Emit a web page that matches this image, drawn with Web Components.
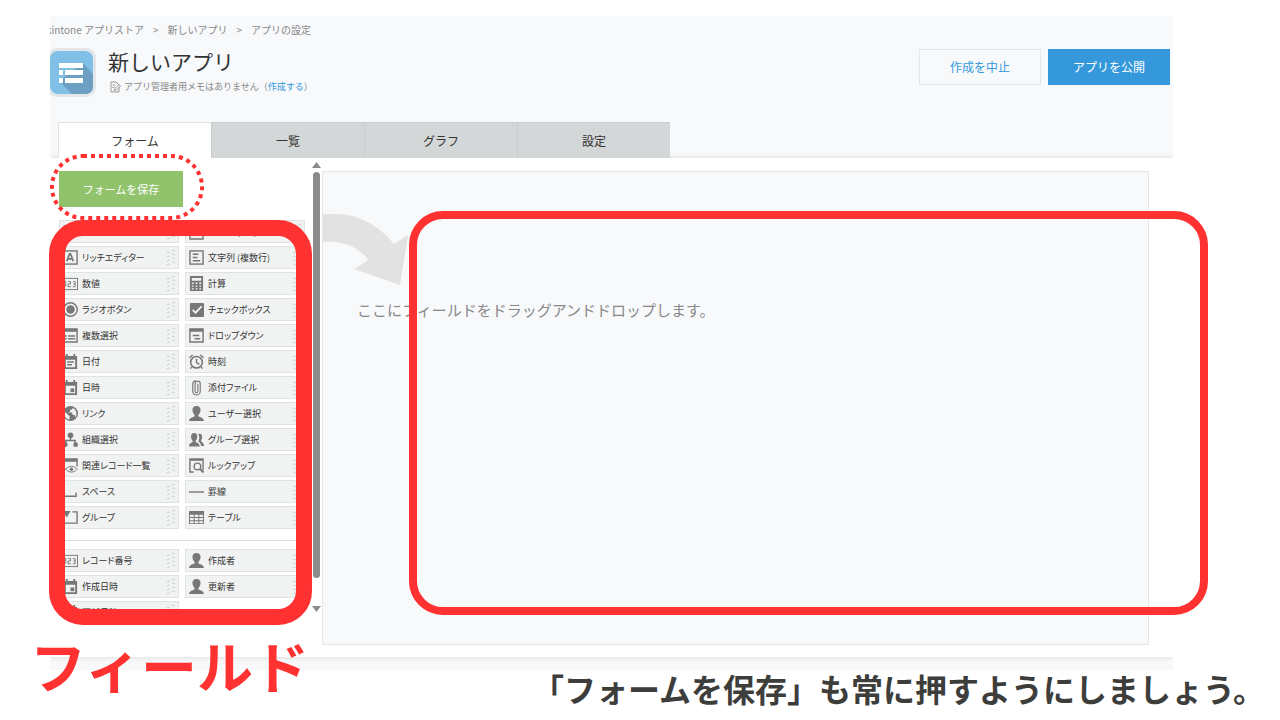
<!DOCTYPE html>
<html lang="ja">
<head>
<meta charset="utf-8">
<title>アプリの設定</title>
<style>
  body { margin: 0; background: #fff; color: #333; font-family: "Noto Sans CJK JP", sans-serif; }
</style>
</head>
<body>
<guide-slide></guide-slide>

<script>
const define = (name, html, setup) => {
  const template = document.createElement('template');
  template.innerHTML = html;
  customElements.define(name, class extends HTMLElement {
    connectedCallback() {
      if (this.shadowRoot) return;
      this.attachShadow({ mode: 'open' }).append(template.content.cloneNode(true));
      if (setup) setup(this, this.shadowRoot);
    }
  });
};

const person = '<path fill="currentColor" d="M8 0c3 0 4.500 2 4.300 4.500C12.200 7 11 8.500 10 9.500v1.500c1 1 5.500 1.200 6 5H0c.5-3.800 5-4 6-5V9.500C5 8.500 3.800 7 3.700 4.500 3.500 2 5 0 8 0z"/>';
const calendar = '<path fill="currentColor" fill-rule="evenodd" d="M1 2h2V0h2v2h6V0h2v2h2v14H1zM3 6v8h10V6z"/>';
const numbers = '<rect x="-1" y="2.500" width="16.500" height="12" fill="none" stroke="currentColor"/><path fill="none" stroke="currentColor" d="M1.500 6.500L3 5.500v6M5.500 6h2.500v2.500H5.500V11.500H8.500M10.500 6H13v5.500h-2.500M11 8.500h2"/>';
const ICONS = {
  label: '<path fill="currentColor" d="M1 1h14v3h-2V3H9v10h2v2H5v-2h2V3H3v1H1z"/>',
  text: '<path fill="none" stroke="currentColor" stroke-width="1.500" d="M1 2h14v14H1zM4 5v6"/>',
  rich: '<rect x="0" y="1" width="15" height="14" fill="none" stroke="currentColor" stroke-width="1.500"/><path fill="none" stroke="currentColor" stroke-width="1.800" d="M4 12l3-8h1l3 8M5 9.500h5"/>',
  multi: '<rect x="1" y="1" width="14" height="14" fill="none" stroke="currentColor" stroke-width="1.500"/><path stroke="currentColor" stroke-width="1.500" d="M4 4.500h6M4 8h5M4 11.500h8"/>',
  number: numbers,
  calc: '<path fill="currentColor" fill-rule="evenodd" d="M1 0h14v16H1zM3 2v3h10V2zM3 7v1.500h2V7zm4 0v1.500h2V7zm4 0v1.500h2V7zM3 10v1.500h2V10zm4 0v1.500h2V10zm4 0v1.500h2V10zM3 13v1.500h2V13zm4 0v1.500h2V13zm4 0v1.500h2V13z"/>',
  radio: '<circle cx="8" cy="8" r="7.200" fill="none" stroke="currentColor" stroke-width="1.500"/><circle cx="8" cy="8" r="4.500" fill="currentColor"/>',
  check: '<rect x="1" y="1" width="15" height="15" rx="1" fill="currentColor"/><path d="M4 8.500l3 3 6.500-7" fill="none" stroke="#fff" stroke-width="1.800"/>',
  select: '<path fill="none" stroke="currentColor" stroke-width="1.500" d="M0 1h15v14H0zM2 8.500h2M5.500 8.500H13M2 11.500h2M5.500 11.500H13"/><path fill="currentColor" d="M0 1h15v3H0z"/>',
  dropdown: '<path fill="none" stroke="currentColor" stroke-width="1.500" d="M1 1h14v14H1zM4 8h7M6 11.500h6"/><path fill="currentColor" d="M1 1h14v3H1z"/>',
  date: calendar + '<path stroke="currentColor" stroke-width="1.500" d="M4.500 8.500h7M4.500 11.500h5"/>',
  time: '<circle cx="8" cy="8.800" r="6.200" fill="none" stroke="currentColor" stroke-width="1.600"/><path d="M8 5v4l3 2M.5 4l3.500-3M15.500 4L12 1M3 14l-1.500 1.500M13 14l1.500 1.500" fill="none" stroke="currentColor" stroke-width="1.500"/>',
  datetime: calendar + '<path fill="currentColor" d="M8 9h4v4H8z"/>',
  clip: '<path d="M9.500 4v8a1.500 1.500 0 0 1-3 0V4a2 2 0 0 1 5.500 0v8a4 4 0 0 1-8 0V4a3.500 3.500 0 0 1 3-3.300" fill="none" stroke="currentColor" stroke-width="1.200"/>',
  link: '<circle cx="8" cy="8" r="8" fill="currentColor"/><path fill="#f1f2f2" d="M1.500 5.500L5 9l2 2v3.500C3 14 1 10 1.500 5.500zM10.500 2l-1 2H7.500v2L5 7h4.500l1 2.500h2L13 12c2-2.500 2.200-7.500-2.500-10z"/>',
  user: person,
  org: '<circle cx="8" cy="3.500" r="3" fill="currentColor"/><path fill="none" stroke="currentColor" stroke-width="1.500" d="M8 5v4M3 12V9h10v3"/><circle cx="2.500" cy="13.500" r="2.500" fill="currentColor"/><circle cx="13.500" cy="13.500" r="2.500" fill="currentColor"/>',
  group: '<path fill="currentColor" d="M5.500 1C8 1 9 3 8.800 5 8.700 7 8 8.500 7 9.500v1c1 1 4 1.200 4.500 5H0c.3-3.800 3-4 4-5v-1C3 8.500 2.200 7 2.200 5 2 3 3 1 5.500 1zM10 2c4-1 5 3 3 7v1c1 1 3 1.500 3 5h-3c-.3-2.500-1.500-4-3-5 1-2 1.500-5 0-8z"/>',
  related: '<path fill="none" stroke="currentColor" stroke-width="1.500" d="M3 12H0V1h15v8"/><path fill="currentColor" d="M0 1h15v3H0z"/><path fill="none" stroke="currentColor" d="M3 12c3-4 9-4 12 0-3 4-9 4-12 0z"/><circle cx="9" cy="12" r="1.800" fill="currentColor"/>',
  lookup: '<path fill="none" stroke="currentColor" stroke-width="1.500" d="M5 15H1V1h14v12"/><path fill="currentColor" d="M1 1h14v2H1z"/><circle cx="9" cy="9" r="3.500" fill="none" stroke="currentColor" stroke-width="1.500"/><path stroke="currentColor" stroke-width="2" d="M11.500 11.500l4 4"/>',
  space: '<path fill="none" stroke="currentColor" stroke-width="1.500" d="M1 9v4h13V9"/>',
  rule: '<path stroke="currentColor" stroke-width="1.500" d="M0 8.500h16"/>',
  box: '<path fill="none" stroke="currentColor" stroke-width="1.500" d="M1 2v12h14V2H10"/><path fill="currentColor" d="M0 1h8L4 8z"/>',
  table: '<path fill="currentColor" fill-rule="evenodd" d="M0 1h16v14H0zM1 5v2.500h4V5zm5 0v2.500h4V5zm5 0v2.500h4V5zM1 8.500V11h4V8.500zm5 0V11h4V8.500zm5 0V11h4V8.500zM1 12v2h4v-2zm5 0v2h4v-2zm5 0v2h4v-2z"/>'
};

define('field-item', `
  <style>
    :host { display: flex; align-items: center; gap: 4px; height: 23px; box-sizing: border-box; padding: 0 2px 0 3px;
      background: #f1f2f2; border: 1px solid #e0e3e3; font-size: 9px; line-height: 16px; color: #333;
      font-feature-settings: "palt"; cursor: move; white-space: nowrap; }
    .icon { width: 15px; height: 15px; flex: none; color: #777; overflow: visible; }
    span { flex: 1; }
    .grip { width: 9px; height: 17px; flex: none; }
  </style>
  <svg class="icon" viewBox="0 0 16 16" aria-hidden="true"></svg>
  <span><slot></slot></span>
  <svg class="grip" viewBox="0 0 9 17" aria-hidden="true"><path fill="none" stroke="#c9cccc" d="M0 4q1.500-2 3 0M0 8q1.500-2 3 0M0 12q1.500-2 3 0M0 16q1.500-2 3 0M5 2q1.500-2 3 0M5 6q1.500-2 3 0M5 10q1.500-2 3 0M5 14q1.500-2 3 0"/></svg>`,
  (host, root) => { root.querySelector('.icon').innerHTML = ICONS[host.getAttribute('icon')]; });

define('action-button', `
  <style>
    :host { display: block; }
    button { display: block; box-sizing: border-box; min-width: 122px; height: 36px; padding: 0 20px; margin: 0;
      font: 12px/20px "Noto Sans CJK JP", sans-serif; color: #3498db; background: #f7f9fb; border: 1px solid #e3e7e8; cursor: pointer; }
    :host([kind="publish"]) button { background: #3498db; border-color: #3498db; color: #fff; }
    :host([kind="save"]) button { min-width: 124px; background: #91c36c; border-color: #91c36c; color: #fff; font-size: 11px; }
  </style>
  <button type="button"><slot></slot></button>`);

define('app-header', `
  <style>
    :host { display: block; padding: 5px 3px 0 0; overflow: hidden; }
    nav { display: flex; gap: 9px; margin-left: -4px; font-size: 10px; line-height: 18px; color: #888; }
    nav a { color: inherit; text-decoration: none; white-space: nowrap; }
    .row { display: flex; align-items: flex-start; gap: 12px; margin: 9px 0 0 -3px; }
    .badge { width: 49px; height: 49px; flex: none; }
    .heading { flex: 1; }
    h1 { margin: 0; font-size: 21px; line-height: 26px; font-weight: 400; color: #333; }
    p { display: flex; align-items: center; gap: 3px; margin: 4px 0 0 2px; font-size: 9px; line-height: 18px; color: #888; }
    p a { color: #3498db; text-decoration: none; }
    p svg { width: 11px; height: 12px; }
    .actions { display: flex; gap: 7px; padding-top: 1px; }
  </style>
  <nav aria-label="パンくずリスト"><a href="#store">kintone アプリストア</a><span>&gt;</span><a href="#app">新しいアプリ</a><span>&gt;</span><a href="#settings">アプリの設定</a></nav>
  <div class="row">
    <svg class="badge" viewBox="0 0 49 49" aria-hidden="true">
      <rect width="49" height="49" rx="10" fill="#e3e7e9"/><rect x="3" y="3" width="43" height="43" rx="8" fill="#80c0e6"/>
      <path fill="#6d9fc2" d="M12 33l13 13h13q8 0 8-8V26L36 15z"/>
      <path fill="#fff" d="M12 15h24v5H12zM12 22h4v5h-4zM18 22h18v5H18zM12 30h4v5h-4zM18 30h18v5H18z"/>
    </svg>
    <div class="heading">
      <h1>新しいアプリ</h1>
      <p><svg viewBox="0 0 11 12" aria-hidden="true"><path fill="none" stroke="#999" d="M9 6v5H1V1h5l3 3M2.500 4h3M2.500 6.500h2M4 9.500l1-2 4-4 1.500 1.500-4 4z"/></svg><span>アプリ管理者用メモはありません（<a href="#memo">作成する</a>）</span></p>
    </div>
    <div class="actions"><action-button>作成を中止</action-button><action-button kind="publish">アプリを公開</action-button></div>
  </div>`);

define('settings-tabs', `
  <style>
    :host { display: flex; padding: 0 8px; }
    button { position: relative; width: 153px; height: 36px; margin: 0; padding: 0; border: 1px solid #c9cdcd; border-width: 1px 0 0 1px;
      background: #d3d7d7; color: #333; font: 12px/20px "Noto Sans CJK JP", sans-serif; cursor: pointer; }
    button[aria-selected="true"] { background: #fff; border-color: #e0e3e3; z-index: 1; }
  </style>
  <button role="tab" aria-selected="true">フォーム</button><button role="tab">一覧</button><button role="tab">グラフ</button><button role="tab">設定</button>`,
  host => host.setAttribute('role', 'tablist'));

define('field-palette', `
  <style>
    :host { display: flex; gap: 7px; width: 262px; flex: none; }
    .list { flex: 1; height: 438px; overflow: hidden; }
    .grid { display: grid; grid-template-columns: 1fr 1fr; gap: 3px 6px; margin-top: 13px; }
    hr { border: 0; border-top: 1px solid #ddd; margin: 11px 0 0; }
    hr + .grid { margin-top: 8px; }
    .bar { display: flex; flex-direction: column; align-items: center; width: 9px; height: 450px; margin-top: -9px; }
    .bar svg { width: 9px; height: 6px; }
    .thumb { width: 7px; height: 406px; margin: 4px 0 auto; border-radius: 4px; background: #8b8b8b; }
  </style>
  <div class="list">
    <action-button kind="save">フォームを保存</action-button>
    <div class="grid">
      <field-item icon="label">ラベル</field-item><field-item icon="text">文字列 (1行)</field-item>
      <field-item icon="rich">リッチエディター</field-item><field-item icon="multi">文字列 (複数行)</field-item>
      <field-item icon="number">数値</field-item><field-item icon="calc">計算</field-item>
      <field-item icon="radio">ラジオボタン</field-item><field-item icon="check">チェックボックス</field-item>
      <field-item icon="select">複数選択</field-item><field-item icon="dropdown">ドロップダウン</field-item>
      <field-item icon="date">日付</field-item><field-item icon="time">時刻</field-item>
      <field-item icon="datetime">日時</field-item><field-item icon="clip">添付ファイル</field-item>
      <field-item icon="link">リンク</field-item><field-item icon="user">ユーザー選択</field-item>
      <field-item icon="org">組織選択</field-item><field-item icon="group">グループ選択</field-item>
      <field-item icon="related">関連レコード一覧</field-item><field-item icon="lookup">ルックアップ</field-item>
      <field-item icon="space">スペース</field-item><field-item icon="rule">罫線</field-item>
      <field-item icon="box">グループ</field-item><field-item icon="table">テーブル</field-item>
    </div>
    <hr>
    <div class="grid">
      <field-item icon="number">レコード番号</field-item><field-item icon="user">作成者</field-item>
      <field-item icon="datetime">作成日時</field-item><field-item icon="user">更新者</field-item>
      <field-item icon="datetime">更新日時</field-item>
    </div>
  </div>
  <div class="bar" aria-hidden="true">
    <svg viewBox="0 0 9 6"><path fill="#8b8b8b" d="M4.500 0L9 6H0z"/></svg>
    <div class="thumb"></div>
    <svg viewBox="0 0 9 6"><path fill="#8b8b8b" d="M4.500 6L9 0H0z"/></svg>
  </div>`);

define('form-canvas', `
  <style>
    :host { display: block; flex: 1; box-sizing: border-box; min-height: 474px; padding-top: 42px; background: #f7f9fb; border: 1px solid #e3e7e8; }
    svg { display: block; width: 87px; height: 72px; }
    p { margin: 12px 0 0 34px; font-size: 15px; line-height: 24px; color: #888; }
  </style>
  <svg viewBox="0 0 87 72" aria-hidden="true"><path fill="#e2e2e2" d="M0 0h14C34 0 56 11 71 30l14-9-8 50-46-16 14-9C36 33 20 26 0 28z"/></svg>
  <p>ここにフィールドをドラッグアンドドロップします。</p>`);

define('app-window', `
  <style>
    :host { display: block; isolation: isolate; background: #f7f9fb; padding-bottom: 13px; overflow: hidden; }
    settings-tabs { margin-top: 25px; }
    main { display: flex; gap: 1px; padding: 13px 24px 12px 9px; background: #fff; box-shadow: 0 0 6px rgba(0,0,0,.14); }
  </style>
  <app-header></app-header>
  <settings-tabs></settings-tabs>
  <main><field-palette></field-palette><form-canvas></form-canvas></main>`);

define('guide-slide', `
  <style>
    :host { display: block; position: relative; padding-top: 16px; }
    app-window { margin: 0 107px 0 50px; }
    .ring { position: absolute; box-sizing: border-box; border: 16px solid #ff3131; border-radius: 34px; pointer-events: none; }
    .fields { left: 49px; top: 220px; width: 263px; height: 405px; }
    .drop { left: 409px; right: 72px; top: 211px; height: 404px; border-width: 8px; }
    .save { position: absolute; left: 50px; top: 154px; width: 155px; height: 66px; pointer-events: none; }
    h2 { position: absolute; left: 30px; top: 636px; margin: 0; font-size: 56px; line-height: 56px; font-weight: 700; color: #ff3131; }
    .note { margin: 0; padding-right: 15px; text-align: right; font-size: 32px; line-height: 36px; font-weight: 700; color: #3d3d3b; }
  </style>
  <app-window></app-window>
  <svg class="save" viewBox="0 0 155 66" aria-hidden="true"><rect x="2" y="2" width="150" height="62" rx="31" fill="none" stroke="#ff3131" stroke-width="4" stroke-dasharray="4 4"/></svg>
  <div class="ring fields"></div>
  <div class="ring drop"></div>
  <h2>フィールド</h2>
  <p class="note">「フォームを保存」も常に押すようにしましょう。</p>`);
</script>
</body>
</html>
